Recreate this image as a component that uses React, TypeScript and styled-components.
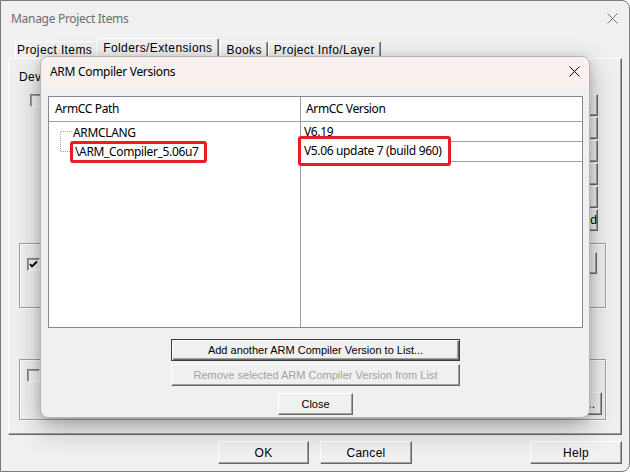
import React from "react";
import styled, { createGlobalStyle, css } from "styled-components";

const GlobalStyle = createGlobalStyle`
  html, body { margin: 0; padding: 0; background: #ffffff; }
  body { width: 630px; height: 472px; overflow: hidden; }
  *, *::before, *::after { box-sizing: border-box; }
`;

const sysFont = `"Liberation Sans", Arial, sans-serif`;
const uiFont = `"Segoe UI", "Noto Sans", sans-serif`;

const Window = styled.div`
  position: relative;
  width: 630px;
  height: 472px;
  border: 1px solid #7a7a7a;
  border-radius: 0 8px 8px 0;
  background: #f0f0f0;
  display: flex;
  flex-direction: column;
  overflow: hidden;
`;

const TitleBar = styled.div`
  height: 35px;
  flex: none;
  display: flex;
  align-items: center;
  justify-content: space-between;
  padding: 0 11px 0 10px;
  font-family: ${uiFont};
  font-size: 12px;
  letter-spacing: -0.3px;
  color: #6d6d6d;
`;

const CloseIcon = ({ color }: { color: string }) => (
  <svg width="11" height="11" viewBox="0 0 11 11">
    <path d="M0.5 0.5 L10.5 10.5 M10.5 0.5 L0.5 10.5" stroke={color} strokeWidth="1" fill="none" />
  </svg>
);

const TabStrip = styled.div`
  height: 22px;
  flex: none;
  display: flex;
  align-items: flex-end;
  padding-left: 14px;
  position: relative;
  z-index: 1;
`;

const Tab = styled.div<{ $active?: boolean; $first?: boolean }>`
  font-family: ${sysFont};
  font-size: 12px;
  letter-spacing: 0.4px;
  color: #000;
  display: flex;
  align-items: center;
  white-space: nowrap;
  background: #f0f0f0;
  border-top: 1px solid #ffffff;
  border-left: 1px solid #ffffff;
  border-right: 1px solid #696969;
  box-shadow: inset -1px 0 #a0a0a0;
  border-radius: 2px 2px 0 0;
  height: 17px;
  padding: 0 5px 0 ${(p) => (p.$first ? 1 : 5)}px;
  ${(p) =>
    p.$active &&
    css`
      height: 21px;
      margin: 0 1px -1px -2px;
      padding: 0 6px 2px 6px;
      position: relative;
      z-index: 2;
    `}
`;

const TabPanel = styled.div`
  height: 377px;
  flex: none;
  margin: 0 7px 0 7px;
  border-top: 1px solid #ffffff;
  border-left: 1px solid #ffffff;
  border-right: 1px solid #696969;
  border-bottom: 1px solid #696969;
  box-shadow: inset -1px -1px #a0a0a0;
  padding: 11px 15px 0 10px;
  display: flex;
  flex-direction: column;
  font-family: ${sysFont};
  font-size: 12px;
  color: #000;
`;

const TopSection = styled.div`
  display: grid;
  grid-template-columns: 1fr auto;
  padding-right: 8px;
`;

const FieldColumn = styled.div`
  display: flex;
  flex-direction: column;
`;

const PanelLabel = styled.div`
  height: 14px;
  line-height: 14px;
  letter-spacing: 0.3px;
`;

const CheckRow = styled.div<{ $indent: number; $top: number }>`
  display: flex;
  align-items: center;
  margin-left: ${(p) => p.$indent}px;
  margin-top: ${(p) => p.$top}px;
`;

const CheckBox = styled.span`
  width: 13px;
  height: 13px;
  flex: none;
  display: inline-flex;
  align-items: center;
  justify-content: center;
  background: #f4f4f4;
  border: 1px solid;
  border-color: #808080 #ffffff #ffffff #808080;
  box-shadow: inset 1px 1px #a0a0a0;
`;

const Check = ({ checked }: { checked?: boolean }) => (
  <CheckBox>
    {checked && (
      <svg width="9" height="9" viewBox="0 0 9 9">
        <path d="M1 4 L3 6.5 L8 1.5" stroke="#000" strokeWidth="1.8" fill="none" />
      </svg>
    )}
  </CheckBox>
);

const ButtonStack = styled.div`
  margin-top: 24px;
  display: flex;
  flex-direction: column;
  align-items: flex-end;
  gap: 1px;
`;

const ClassicButton = styled.button<{ $w: number; $h?: number; $default?: boolean; $small?: boolean }>`
  width: ${(p) => p.$w}px;
  height: ${(p) => p.$h ?? 22}px;
  padding: 0;
  margin: 0;
  font-family: ${sysFont};
  font-size: ${(p) => (p.$small ? 11 : 12)}px;
  letter-spacing: ${(p) => (p.$small ? 0 : 0.3)}px;
  color: #000;
  background: #f0f0f0;
  border: 1px solid;
  border-color: #ffffff #696969 #696969 #ffffff;
  box-shadow: inset -1px -1px #a0a0a0;
  border-radius: 0;
  display: flex;
  align-items: center;
  justify-content: center;
  flex: none;
  &:disabled {
    color: #a0a0a0;
  }
  ${(p) =>
    p.$default &&
    css`
      border: 1px solid #3c3c3c;
      box-shadow: inset 1px 1px #ffffff, inset -1px -1px #696969, inset -2px -2px #a0a0a0;
    `}
`;

const GroupBox = styled.div<{ $top: number; $h: number }>`
  margin-top: ${(p) => p.$top}px;
  height: ${(p) => p.$h}px;
  border: 1px solid #a0a0a0;
  box-shadow: inset 1px 1px #ffffff, 1px 1px #ffffff;
  display: flex;
  justify-content: space-between;
`;

const GroupTopRow = styled.div`
  display: flex;
  align-items: flex-start;
  justify-content: space-between;
  width: 100%;
  padding: 8px 8px 0 7px;
`;

const GroupColumn = styled.div`
  display: flex;
  flex-direction: column;
  width: 100%;
  padding: 9px 3px 4px 7px;
`;

const GroupFoot = styled.div`
  margin-top: auto;
  display: flex;
  justify-content: flex-end;
`;

const Footer = styled.div`
  flex: 1;
  display: flex;
  align-items: flex-start;
  gap: 11px;
  padding: 6px 7px 0 217px;
`;

const FooterSpacer = styled.div`
  flex: 1;
`;

/* ---------- modal ---------- */

const Modal = styled.div`
  position: absolute;
  left: 39px;
  top: 55px;
  width: 550px;
  height: 362px;
  border: 1px solid #b4b4b4;
  border-radius: 8px;
  background: #f0f0f0;
  box-shadow: 0 10px 28px rgba(0, 0, 0, 0.3), 0 2px 8px rgba(0, 0, 0, 0.15);
  overflow: hidden;
  z-index: 5;
  display: flex;
  flex-direction: column;
`;

const ModalTitleBar = styled.div`
  height: 29px;
  flex: none;
  background: #f9f0f0;
  display: flex;
  align-items: center;
  justify-content: space-between;
  padding: 0 9px 0 9px;
  font-family: ${uiFont};
  font-size: 12px;
  letter-spacing: -0.3px;
  color: #000;
`;

const ModalBody = styled.div`
  flex: 1;
  display: flex;
  flex-direction: column;
  align-items: stretch;
  padding: 10px 6px 0 7px;
`;

const ListView = styled.div`
  height: 232px;
  flex: none;
  background: #ffffff;
  border: 1px solid #828790;
  display: grid;
  grid-template-columns: 251px 1fr;
  grid-template-rows: 25px 1fr;
  font-family: ${uiFont};
  font-size: 12px;
  letter-spacing: -0.35px;
  color: #000;
`;

const HeaderCell = styled.div<{ $divider?: boolean }>`
  display: flex;
  align-items: center;
  padding-left: ${(p) => (p.$divider ? 5 : 6)}px;
  padding-bottom: 1px;
  border-bottom: 1px solid #a0a0a0;
  ${(p) => p.$divider && `border-left: 1px solid #a0a0a0;`}
`;

const TreeColumn = styled.div`
  display: flex;
  flex-direction: column;
`;

const TreeRow = styled.div`
  height: 20px;
  display: flex;
  align-items: center;
  padding-left: 11px;
  white-space: nowrap;
`;

const Connector = ({ last }: { last?: boolean }) => (
  <svg width="13" height="20" viewBox="0 0 13 20" style={{ flex: "none" }}>
    <g stroke="#a0a0a0" strokeWidth="1" strokeDasharray="1 1" shapeRendering="crispEdges">
      <line x1="0.5" y1={last ? 0 : 10} x2="0.5" y2={last ? 10 : 20} />
      <line x1="1" y1="9.5" x2="13" y2="9.5" />
    </g>
  </svg>
);

const VersionColumn = styled.div`
  border-left: 1px solid #a0a0a0;
  display: flex;
  flex-direction: column;
`;

const VersionRow = styled.div`
  height: 20px;
  display: flex;
  align-items: center;
  padding-left: 3px;
  padding-bottom: 1px;
  border-bottom: 1px solid #a0a0a0;
  white-space: nowrap;
`;

const Highlight = styled.span<{ $v: number; $l: number; $r: number; $pl: number }>`
  display: inline-block;
  position: relative;
  z-index: 1;
  background: #ffffff;
  border: 3px solid #ec1c24;
  border-radius: 3px;
  line-height: 16px;
  padding: ${(p) => p.$v}px ${(p) => p.$r}px ${(p) => p.$v}px ${(p) => p.$pl}px;
  margin: ${(p) => -p.$v - 3}px 0 ${(p) => -p.$v - 3}px ${(p) => p.$l}px;
`;

const ButtonColumn = styled.div`
  display: flex;
  flex-direction: column;
  align-items: center;
  padding-top: 11px;
`;

export default function App() {
  return (
    <>
      <GlobalStyle />
      <Window>
        <TitleBar>
          <span>Manage Project Items</span>
          <CloseIcon color="#777777" />
        </TitleBar>
        <TabStrip>
          <Tab $first>Project Items</Tab>
          <Tab $active>Folders/Extensions</Tab>
          <Tab>Books</Tab>
          <Tab>Project Info/Layer</Tab>
        </TabStrip>
        <TabPanel>
          <TopSection>
            <FieldColumn>
              <PanelLabel>Deve</PanelLabel>
              <CheckRow $indent={11} $top={10}>
                <Check />
              </CheckRow>
            </FieldColumn>
            <ButtonStack>
              <ClassicButton $w={24}>...</ClassicButton>
              <ClassicButton $w={24}>...</ClassicButton>
              <ClassicButton $w={24}>...</ClassicButton>
              <ClassicButton $w={24}>...</ClassicButton>
              <ClassicButton $w={24}>...</ClassicButton>
              <ClassicButton $w={24}>Add</ClassicButton>
            </ButtonStack>
          </TopSection>
          <GroupBox $top={12} $h={65}>
            <GroupTopRow>
              <CheckRow $indent={0} $top={6}>
                <Check checked />
              </CheckRow>
              <ClassicButton $w={60} />
            </GroupTopRow>
          </GroupBox>
          <GroupBox $top={51} $h={61}>
            <GroupColumn>
              <CheckRow $indent={0} $top={0}>
                <Check />
              </CheckRow>
              <GroupFoot>
                <ClassicButton $w={24} $h={23}>...</ClassicButton>
              </GroupFoot>
            </GroupColumn>
          </GroupBox>
        </TabPanel>
        <Footer>
          <ClassicButton $w={91} $h={23}>OK</ClassicButton>
          <ClassicButton $w={92} $h={23}>Cancel</ClassicButton>
          <FooterSpacer />
          <ClassicButton $w={92} $h={23}>Help</ClassicButton>
        </Footer>

        <Modal>
          <ModalTitleBar>
            <span>ARM Compiler Versions</span>
            <CloseIcon color="#000000" />
          </ModalTitleBar>
          <ModalBody>
            <ListView>
              <HeaderCell>ArmCC Path</HeaderCell>
              <HeaderCell $divider>ArmCC Version</HeaderCell>
              <TreeColumn>
                <TreeRow>
                  <Connector />
                  <span>ARMCLANG</span>
                </TreeRow>
                <TreeRow>
                  <Connector last />
                  <Highlight $v={0} $l={-3} $r={5} $pl={2}>\ARM_Compiler_5.06u7</Highlight>
                </TreeRow>
              </TreeColumn>
              <VersionColumn>
                <VersionRow>V6.19</VersionRow>
                <VersionRow>
                  <Highlight $v={4} $l={-6} $r={7} $pl={3}>V5.06 update 7 (build 960)</Highlight>
                </VersionRow>
              </VersionColumn>
            </ListView>
            <ButtonColumn>
              <ClassicButton $w={289} $default $small>
                Add another ARM Compiler Version to List...
              </ClassicButton>
              <ClassicButton $w={289} $small disabled style={{ marginTop: 3 }}>
                Remove selected ARM Compiler Version from List
              </ClassicButton>
              <ClassicButton $w={75} $small style={{ marginTop: 7 }}>
                Close
              </ClassicButton>
            </ButtonColumn>
          </ModalBody>
        </Modal>
      </Window>
    </>
  );
}
